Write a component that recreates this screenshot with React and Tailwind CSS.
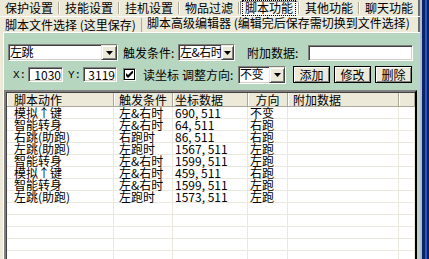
import React from "react";

const topTabs = ["保护设置", "技能设置", "挂机设置", "物品过滤", "脚本功能", "其他功能", "聊天功能"];

const columns = [
    { title: "脚本动作", w: "w-[107px]", head: "pl-[7px]" },
    { title: "触发条件", w: "w-[59px]", head: "pl-[5px]" },
    { title: "坐标数据", w: "w-[75px]", head: "pl-[2px]" },
    { title: "方向", w: "w-[40px]", head: "justify-center" },
    { title: "附加数据", w: "w-[111px]", head: "pl-[5px]" },
    { title: "", w: "flex-1", head: "" },
];

const rows = [
    ["模拟↑键", "左&右时", "690, 511", "不变"],
    ["智能转身", "左&右时", "64, 511", "右跑"],
    ["右跳(助跑)", "右跑时", "86, 511", "右跑"],
    ["左跳(助跑)", "左跑时", "1567, 511", "左跑"],
    ["智能转身", "左&右时", "1599, 511", "左跑"],
    ["模拟↑键", "左&右时", "459, 511", "右跑"],
    ["智能转身", "左&右时", "1599, 511", "左跑"],
    ["左跳(助跑)", "左跑时", "1573, 511", "左跑"],
];

const cellPad = ["pl-[7px]", "pl-[5px]", "pl-[2px]", "pl-[2px]", "pl-[2px]", ""];

const sunken =
    "border border-t-[#808080] border-l-[#808080] border-b-white border-r-white shadow-[inset_1px_1px_0_#404040,inset_-1px_-1px_0_#d4d0c8] bg-white";

const DropArrow = ({ narrow }) => (
    <div className={`${narrow ? "w-[13px]" : "w-[16px]"} h-full shrink-0 bg-[#ece9d8] border border-t-[#ece9d8] border-l-[#ece9d8] border-b-[#404040] border-r-[#404040] shadow-[inset_1px_1px_0_white,inset_-1px_-1px_0_#808080] flex items-center justify-center`}>
        <svg width="7" height="4" viewBox="0 0 7 4">
            <path d="M0 0h7L3.5 4z" fill="black" />
        </svg>
    </div>
);

const Combo = ({ value, className, narrow }) => (
    <div className={`${sunken} ${className} flex`}>
        <div className="flex-1 pl-[1px] leading-[13px] whitespace-nowrap overflow-hidden tracking-[-0.5px]">{value}</div>
        <DropArrow narrow={narrow} />
    </div>
);

const Btn = ({ children }) => (
    <div className="w-[37px] h-[17px] border border-black bg-[#ece9d8] shadow-[inset_1px_1px_0_white,inset_-1px_-1px_0_#808080] flex items-center justify-center leading-[12px]">
        {children}
    </div>
);

export default function App() {
    return (
        <div className="w-[429px] h-[259px] flex overflow-hidden bg-[#ece9d8] text-[12px] text-black font-['Noto_Sans_CJK_SC',sans-serif] leading-[12px]">
            <div className="w-[420px] flex flex-col">
                {/* top tab row */}
                <div className="h-[19px] flex items-stretch">
                    {topTabs.map((t, i) => (
                        <div key={t} className="w-[60px] flex items-stretch">
                            {i === 4 ? (
                                <div className="w-[58px] mt-[1px] mb-[1px] border border-t-[#808080] border-l-[#808080] border-b-white border-r-white bg-[#f5f4ee] flex items-center justify-center">
                                    <span className="outline outline-1 outline-dotted outline-black outline-offset-[1px] px-[1px]">{t}</span>
                                </div>
                            ) : (
                                <div className="w-[58px] pl-[5px] flex items-center">{t}</div>
                            )}
                            {i < topTabs.length - 1 ? (
                                <div className="w-[2px] my-[2px] border-l border-l-[#aca899] border-r border-r-white" />
                            ) : (
                                <div className="w-[2px] bg-[#716f64]" />
                            )}
                        </div>
                    ))}
                </div>

                {/* second tab row */}
                <div className="h-[20px] flex border-t border-t-white">
                    <div className="w-[142px] mt-[1px] pl-[5px] flex items-center border-r border-r-[#aca899]">
                        脚本文件选择 (这里保存)
                    </div>
                    <div className="flex-1 pl-[5px] flex items-center pb-[3px] border-r-2 border-r-[#716f64] whitespace-nowrap">
                        脚本高级编辑器 (编辑完后保存需切换到文件选择)
                    </div>
                </div>

                {/* page */}
                <div className="flex-1 ml-[3px] bg-[#b7d6c0] border-l border-t border-white flex flex-col">
                    <div className="mt-[11px] flex items-start">
                        <Combo value="左跳" className="ml-[4px] w-[110px] h-[17px]" />
                        <div className="ml-[5px] w-[55px] leading-[17px]">触发条件:</div>
                        <Combo value="左&右时" narrow className="w-[57px] h-[17px]" />
                        <div className="ml-[12px] w-[61px] leading-[17px]">附加数据:</div>
                        <div className={`${sunken} w-[105px] h-[16px] mt-[1px]`} />
                    </div>

                    <div className="mt-[4px] h-[19px] flex items-center">
                        <div className="ml-[9px] w-[15px] font-['Liberation_Mono',monospace] text-[11px]">X:</div>
                        <div className={`${sunken} w-[35px] h-[15px] text-right pr-[1px] leading-[13px]`}>1030</div>
                        <div className="ml-[5px] w-[15px] font-['Liberation_Mono',monospace] text-[11px]">Y:</div>
                        <div className={`${sunken} w-[34px] h-[15px] text-right pr-[1px] leading-[13px]`}>3119</div>
                        <div className="ml-[6px] w-[13px] h-[13px] bg-white border border-t-[#808080] border-l-[#808080] border-b-white border-r-white shadow-[inset_1px_1px_0_#000,inset_-1px_-1px_0_#000] flex items-center justify-center">
                            <svg width="7" height="7" viewBox="0 0 7 7">
                                <path d="M0 2v3l2 2 5-5V-1L2 4z" fill="black" />
                            </svg>
                        </div>
                        <div className="ml-[7px] w-[39px]">读坐标</div>
                        <div className="w-[56px]">调整方向:</div>
                        <Combo value="不变" className="w-[48px] h-[18px]" />
                        <div className="ml-[7px] flex gap-[4px]">
                            <Btn>添加</Btn>
                            <Btn>修改</Btn>
                            <Btn>删除</Btn>
                        </div>
                    </div>

                    {/* list view */}
                    <div className="mt-[6px] w-[413px] flex-1 flex flex-col bg-white border-t-2 border-l-2 border-r-2 border-t-[#808080] border-l-[#808080] border-r-black shadow-[inset_1px_1px_0_#404040] overflow-hidden">
                        <div className="h-[14px] mt-[1px] ml-[1px] flex bg-[#ece9d8] border-b border-b-[#aca899] shrink-0">
                            {columns.map((c, i) => (
                                <div
                                    key={i}
                                    className={`${c.w} ${c.head} flex items-center whitespace-nowrap border-r border-r-[#aca899] shadow-[inset_1px_0_0_white]`}
                                >
                                    {c.title}
                                </div>
                            ))}
                        </div>
                        {Array.from({ length: 13 }).map((_, r) => (
                            <div key={r} className="h-[12px] ml-[1px] flex border-b border-b-[#ebe9dd] shrink-0">
                                {columns.map((c, i) => (
                                    <div
                                        key={i}
                                        className={`${c.w} ${cellPad[i]} whitespace-nowrap border-r border-r-[#ebe9dd] leading-[11px]`}
                                    >
                                        {rows[r] ? rows[r][i] : ""}
                                    </div>
                                ))}
                            </div>
                        ))}
                    </div>
                </div>
            </div>

            {/* neighbouring window frame */}
            <div className="w-[9px] flex">
                <div className="w-[2px] bg-[#b3bcd6]" />
                <div className="w-[3px] bg-[#0a246a]" />
                <div className="w-[2px] bg-[#2a56b8]" />
                <div className="w-[2px] bg-[#0a1f5c]" />
            </div>
        </div>
    );
}
